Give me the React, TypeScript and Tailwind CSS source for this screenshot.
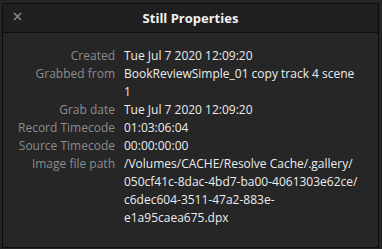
const rows: { label: string; lines: string[] }[] = [
  { label: "Created", lines: ["Tue Jul 7 2020 12:09:20"] },
  { label: "Grabbed from", lines: ["BookReviewSimple_01 copy track 4 scene", "1"] },
  { label: "Grab date", lines: ["Tue Jul 7 2020 12:09:20"] },
  { label: "Record Timecode", lines: ["01:03:06:04"] },
  { label: "Source Timecode", lines: ["00:00:00:00"] },
  {
    label: "Image file path",
    lines: [
      "/Volumes/CACHE/Resolve Cache/.gallery/",
      "050cf41c-8dac-4bd7-ba00-4061303e62ce/",
      "c6dec604-3511-47a2-883e-",
      "e1a95caea675.dpx",
    ],
  },
];

export default function App() {
  return (
    <div
      className="w-[382px] h-[249px] bg-[#242424] pt-[3px] pl-[2px] overflow-hidden"
      style={{ fontFamily: '"Open Sans", "Liberation Sans", sans-serif' }}
    >
      <div className="w-[377px] h-[245px] border border-[#0d0d0d] bg-[#262626] flex flex-col">
        {/* title bar */}
        <div className="relative h-[29px] shrink-0 bg-[#1f1f1f] border-b border-[#0d0d0d] flex items-center justify-center">
          <button className="absolute left-[10px] top-[8px] w-[9px] h-[9px] text-[#8a8a8a]">
            <svg viewBox="0 0 9 9" className="w-[9px] h-[9px]" stroke="currentColor" strokeWidth="1.5">
              <path d="M1 1l7 7M8 1l-7 7" />
            </svg>
          </button>
          <h1 className="text-[13px] font-bold text-[#f2f2f2] leading-none">Still Properties</h1>
        </div>

        {/* properties */}
        <div className="pt-[14px] pl-[12px] grid grid-cols-[100px_1fr] gap-x-[9px] text-[12px] leading-[18px]">
          {rows.map((row) => (
            <div key={row.label} className="contents">
              <div className="text-right text-[#8c8c8c] whitespace-nowrap">{row.label}</div>
              <div className="text-[#ececec] whitespace-nowrap">
                {row.lines.map((line, i) => (
                  <div key={i}>{line}</div>
                ))}
              </div>
            </div>
          ))}
        </div>
      </div>
    </div>
  );
}
